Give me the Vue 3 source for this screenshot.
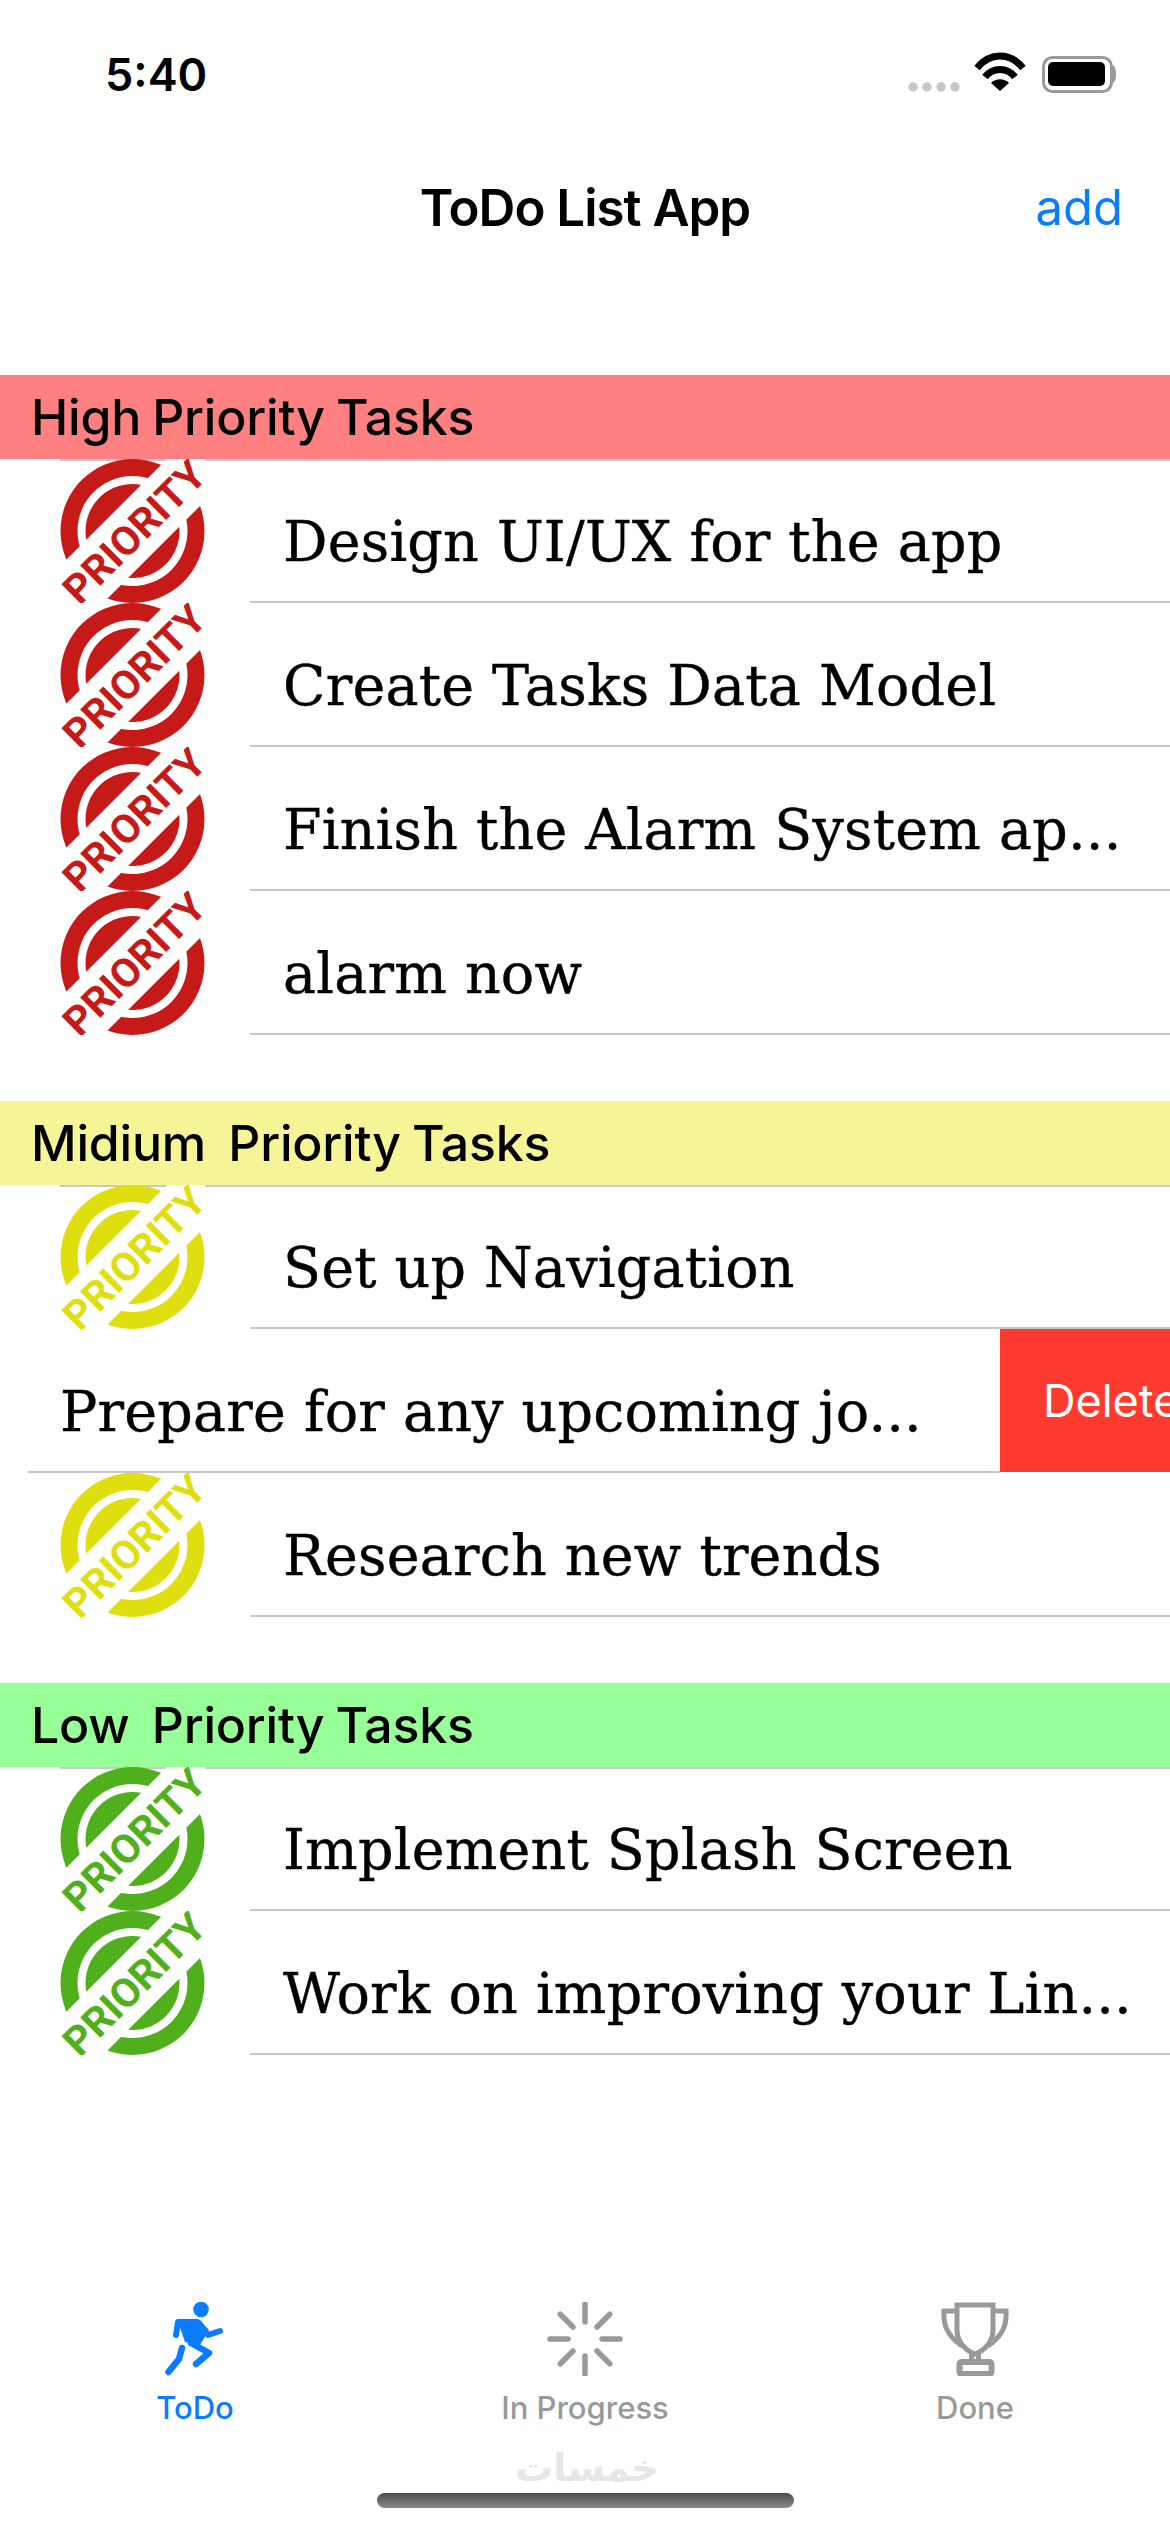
<template>
  <div class="screen">
    <div class="statusBar">
      <span class="time">5:40</span>
      <svg class="statusIcons" width="220" height="50" viewBox="0 0 220 50">
        <circle v-for="x in [11, 25, 39, 53]" :key="x" :cx="x" cy="37" r="4.7" fill="#c6c6c6" />
        <path d="M75 18 C88 2 108 2 121 18 M83 27 C91 17 105 17 113 27" fill="none" stroke="#000" stroke-width="7" />
        <path d="M98 41 L89 33 C94 28 102 28 107 33 Z" fill="#000" />
        <rect x="141.5" y="7.5" width="68" height="34" rx="9" fill="none" stroke="#999" stroke-width="3" />
        <rect x="146" y="12" width="57" height="24" rx="5" fill="#000" />
        <path d="M211 15 C215 17 215 31 211 33 Z" fill="#999" />
      </svg>
    </div>

    <div class="navBar">
      <span class="navTitle">ToDo List App</span>
      <span class="navAdd">add</span>
    </div>

    <section v-for="section in sections" :key="section.title" class="section">
      <div class="sectionHeader" :class="section.tone">{{ section.title }}</div>
      <div class="rows">
        <div
          v-for="row in section.rows"
          :key="row.text"
          class="row"
          :class="{ swiped: row.swiped }"
        >
          <svg v-if="!row.swiped" class="priority" :class="section.tone" viewBox="0 0 145 144" width="145" height="144">
            <g class="mark">
              <path d="M72.5 0 A72 72 0 1 0 72.5 144 A72 72 0 1 0 72.5 0 Z M72.5 17 A55 55 0 1 1 72.5 127 A55 55 0 1 1 72.5 17 Z" fill-rule="evenodd" />
              <circle cx="72.5" cy="72" r="47" />
            </g>
            <path class="bandCut" d="M107 0 L0 107 L0 187 L187 0 Z" />
            <text
              class="markText"
              x="0"
              y="0"
              text-anchor="middle"
              textLength="182"
              lengthAdjust="spacingAndGlyphs"
              transform="translate(84 83) rotate(-45)"
            >PRIORITY</text>
          </svg>
          <div class="rowBody">
            <span class="rowText">{{ row.text }}</span>
          </div>
          <div v-if="row.swiped" class="deleteBtn"><span>Delete</span></div>
        </div>
      </div>
    </section>

    <div class="tabBar">
      <div class="tab active">
        <svg width="120" height="74" viewBox="-4 22 120 74">
          <circle cx="62" cy="29.5" r="7.8" fill="#0a7cff" />
          <path d="M38 39 H59 L70 50 L61 65 L46 62 Z" fill="#0a7cff" />
          <g fill="none" stroke="#0a7cff" stroke-linecap="round" stroke-linejoin="round">
            <path d="M37 55 L39 42 H56" stroke-width="6" />
            <path d="M60 43 L69 55 L81 51" stroke-width="6" />
            <path d="M52 63 L70 73 L57 84" stroke-width="6.5" />
            <path d="M43 68 L40 79 L29.5 92" stroke-width="6.5" />
          </g>
        </svg>
        <span class="tabLabel">ToDo</span>
      </div>
      <div class="tab">
        <svg width="76" height="74" viewBox="-38 -37 76 74">
          <g stroke="#999" stroke-width="5.5" stroke-linecap="round">
            <line v-for="a in [0, 45, 90, 135, 180, 225, 270, 315]" :key="a" x1="0" y1="-17" x2="0" y2="-35" :transform="`rotate(${a})`" />
          </g>
        </svg>
        <span class="tabLabel">In Progress</span>
      </div>
      <div class="tab">
        <svg width="68" height="74" viewBox="0 0 68 74">
          <g fill="none" stroke="#999" stroke-width="5">
            <path d="M16 3 H52 V28 C52 40 43 49 34 52 C25 49 16 40 16 28 Z" />
            <path d="M16 9 H3 C2 24 7 34 21 44 M52 9 H65 C66 24 61 34 47 44" />
            <path d="M30.5 51 V60 M37.5 51 V60" />
            <rect x="18.5" y="60" width="32" height="12" rx="2" stroke-width="6" />
          </g>
        </svg>
        <span class="tabLabel">Done</span>
      </div>
    </div>

    <span class="watermark">خمسات</span>
    <div class="homeBar"></div>
  </div>
</template>

<script setup>
const sections = [
  {
    title: "High Priority Tasks",
    tone: "high",
    rows: [
      { id: 1, text: "Design UI/UX for the app" },
      { id: 2, text: "Create Tasks Data Model" },
      { id: 3, text: "Finish the Alarm System ap..." },
      { id: 4, text: "alarm now" },
    ],
  },
  {
    title: "Midium  Priority Tasks",
    tone: "mid",
    rows: [
      { id: 5, text: "Set up Navigation" },
      { id: 6, text: "Prepare for any upcoming jo...", swiped: true },
      { id: 7, text: "Research new trends" },
    ],
  },
  {
    title: "Low  Priority Tasks",
    tone: "low",
    rows: [
      { id: 8, text: "Implement Splash Screen" },
      { id: 9, text: "Work on improving your Lin..." },
    ],
  },
];
</script>

<style scoped>
.screen {
  position: relative;
  display: flex;
  flex-direction: column;
  width: 1170px;
  height: 2532px;
  overflow: hidden;
  background: #fff;
  font-family: Inter, "Liberation Sans", sans-serif;
  color: #000;
}

.statusBar {
  display: flex;
  justify-content: space-between;
  align-items: flex-start;
  height: 150px;
  padding: 50px 48px 0 105px;
  box-sizing: border-box;
}

.time {
  font-size: 45px;
  line-height: 50px;
  font-weight: 600;
}

.navBar {
  position: relative;
  height: 114px;
  margin-bottom: 111px;
  display: flex;
  align-items: center;
  justify-content: center;
}

.navTitle {
  font-size: 51px;
  font-weight: 600;
  letter-spacing: -1px;
}

.navAdd {
  position: absolute;
  right: 47px;
  font-size: 49px;
  color: #0a7cff;
}

.section {
  margin-bottom: 66px;
}

.sectionHeader {
  height: 84px;
  line-height: 84px;
  padding-left: 31px;
  font-size: 50px;
  font-weight: 500;
  letter-spacing: -0.2px;
  word-spacing: -2px;
  white-space: pre;
}

.sectionHeader.high {
  background: #ff8080;
}

.sectionHeader.mid {
  background: #f5f598;
}

.sectionHeader.low {
  background: #98fe98;
}

.rows {
  position: relative;
}

.rows::before {
  content: "";
  position: absolute;
  z-index: 1;
  top: 0;
  left: 60px;
  right: 0;
  height: 2px;
  background: #c8c8c8;
}

.row {
  display: flex;
  height: 144px;
  padding-left: 60px;
  box-sizing: border-box;
}

.priority {
  flex: none;
  position: relative;
  z-index: 2;
  margin-right: 45px;
}

.priority .mark {
  fill: #c51a18;
}

.priority .bandCut {
  fill: #fff;
}

.priority .markText {
  font-family: Roboto, "Liberation Sans", sans-serif;
  font-size: 40px;
  font-weight: 700;
  fill: #c51a18;
}

.priority.mid .mark,
.priority.mid .markText {
  fill: #dfdf10;
}

.priority.low .mark,
.priority.low .markText {
  fill: #4fb01c;
}

.rowBody {
  flex: 1;
  min-width: 0;
  display: flex;
  align-items: center;
  padding: 22px 0 0 33px;
  border-bottom: 2px solid #c8c8c8;
}

.rowText {
  font-family: "DejaVu Serif", serif;
  font-size: 55.5px;
  letter-spacing: 0.2px;
  -webkit-text-stroke: 0.4px #000;
  white-space: nowrap;
}

.swiped {
  padding-left: 28px;
}

.swiped .rowBody {
  padding-left: 32px;
}

.deleteBtn {
  flex: none;
  width: 170px;
  background: #ff3b30;
  color: #fff;
  font-size: 45px;
  display: flex;
  align-items: center;
  padding-left: 43px;
  box-sizing: border-box;
  overflow: hidden;
  white-space: nowrap;
  margin-bottom: 1px;
}

.tabBar {
  margin-top: auto;
  margin-bottom: 104px;
  display: grid;
  grid-template-columns: repeat(3, 1fr);
}

.tab {
  display: flex;
  flex-direction: column;
  align-items: center;
  color: #999;
}

.tab.active {
  color: #0a7cff;
}

.tabLabel {
  font-size: 31px;
  line-height: 40px;
  margin-top: 12px;
  font-weight: 500;
}

.watermark {
  position: absolute;
  left: 515px;
  top: 2446px;
  width: 140px;
  text-align: center;
  font-family: "DejaVu Sans", sans-serif;
  font-size: 38px;
  font-weight: 700;
  color: #e6e6e6;
}

.homeBar {
  position: absolute;
  left: 377px;
  top: 2493px;
  width: 417px;
  height: 15px;
  border-radius: 8px;
  background: linear-gradient(180deg, #4c4c4c, #8a8a8a);
}
</style>
